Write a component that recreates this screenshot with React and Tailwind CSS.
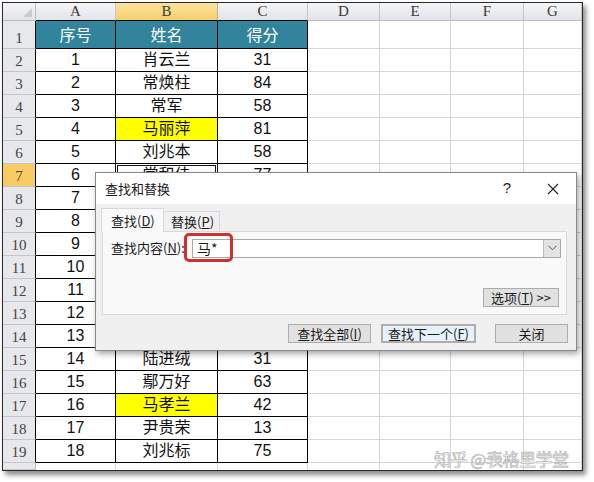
import React from "react";

const SANS = { fontFamily: '"Liberation Sans", "Noto Sans CJK SC", sans-serif' };
const CJK = { fontFamily: '"Noto Sans CJK SC", "Noto Sans", sans-serif' };
const HEAD = { fontFamily: '"Liberation Serif", "DejaVu Serif", serif' };

const rows = [
  [1, "肖云兰", 31],
  [2, "常焕柱", 84],
  [3, "常军", 58],
  [4, "马丽萍", 81, true],
  [5, "刘兆本", 58],
  [6, "常和佳", 77],
  [7, "王春梅", 66],
  [8, "李建国", 92],
  [9, "赵一鸣", 47],
  [10, "孙晓燕", 70],
  [11, "周立新", 55],
  [12, "吴秀英", 88],
  [13, "郑海涛", 39],
  [14, "陆进绒", 31],
  [15, "鄢万好", 63],
  [16, "马孝兰", 42, true],
  [17, "尹贵荣", 13],
  [18, "刘兆标", 75],
];

const cols = ["A", "B", "C", "D", "E", "F", "G"];

function ColHeaders() {
  return (
    <>
      <div className="relative border-r border-b border-[#b9bcc2] bg-gradient-to-b from-[#f4f5f7] to-[#e2e4e8]">
        <svg className="absolute right-[3px] bottom-[3px]" width="9" height="9" viewBox="0 0 9 9">
          <path d="M9 0 L9 9 L0 9 Z" fill="#c9cbcf" />
        </svg>
      </div>
      {cols.map((c, i) => (
        <div
          key={c}
          style={HEAD}
          className={
            "flex items-center justify-center text-[15px] text-[#3a3a3a] border-r border-b " +
            (i < 3 ? "border-b-black " : "border-b-[#b9bcc2] ") +
            (i === 1
              ? "bg-gradient-to-b from-[#fbe39f] to-[#f6cf6a] border-r-[#c9b27a]"
              : "bg-gradient-to-b from-[#f4f5f7] to-[#e2e4e8] border-r-[#c3c6cb]")
          }
        >
          {c}
        </div>
      ))}
    </>
  );
}

function RowHead({ n, active }) {
  return (
    <div
      style={HEAD}
      className={
        "flex items-end justify-center pb-[1px] text-[15px] leading-[18px] text-[#444] border-b border-r border-b-[#c3c6cb] " +
        (n ? "border-r-black " : "border-r-[#b9bcc2] ") +
        (active ? "bg-[#f8cb63]" : "bg-[#e6e8ec]")
      }
    >
      {n}
    </div>
  );
}

function Cell({ children, yellow, teal, selected }) {
  let cls = "flex items-end justify-center border-r border-b border-black text-[16px] leading-[20px] pb-[1px] text-[#111] ";
  if (teal) cls = "flex items-center justify-center border-r border-b border-black text-[16px] text-white bg-[#31849b] pt-[2px] ";
  if (yellow) cls += "bg-[#ffff00] ";
  if (selected) cls += "shadow-[inset_0_0_0_1px_#fff,inset_0_0_0_2px_#111] ";
  return (
    <div style={SANS} className={cls}>
      <span>{children}</span>
    </div>
  );
}

function Empties() {
  return (
    <>
      {[0, 1, 2, 3].map((i) => (
        <div key={i} className="border-r border-b border-[#d6d6d6]" />
      ))}
    </>
  );
}

function Sheet() {
  return (
    <div className="ml-[2px] mt-[2px] w-[581px] h-[469px] border border-[#2a2a2a] bg-white overflow-hidden shadow-[3px_4px_5px_rgba(0,0,0,0.45)]">
      <div className="grid grid-cols-[33px_80px_102px_90px_72px_71px_73px_1fr] grid-rows-[18px_28px_repeat(18,23px)_1fr] h-full">
        <ColHeaders />
        <RowHead n={1} />
        <Cell teal>序号</Cell>
        <Cell teal>姓名</Cell>
        <Cell teal>得分</Cell>
        <Empties />
        {rows.map(([no, name, score, yellow], i) => (
          <React.Fragment key={no}>
            <RowHead n={i + 2} active={i + 2 === 7} />
            <Cell>{no}</Cell>
            <Cell yellow={yellow} selected={i + 2 === 7}>
              {name}
            </Cell>
            <Cell>{score}</Cell>
            <Empties />
          </React.Fragment>
        ))}
        <RowHead />
        {[0, 1, 2, 3, 4, 5, 6].map((i) => (
          <div key={i} className="border-r border-[#d6d6d6]" />
        ))}
      </div>
    </div>
  );
}

function Btn({ children, className = "" }) {
  return (
    <div
      className={
        "h-[19px] flex items-center justify-center bg-[#e1e1e1] border border-[#adadad] text-[13px] leading-none whitespace-nowrap " +
        className
      }
    >
      {children}
    </div>
  );
}

function Dialog() {
  return (
    <div
      style={CJK}
      className="absolute left-[95px] top-[172px] w-[482px] h-[179px] bg-[#f0f0f0] border border-[#8a8a8a] shadow-[2px_3px_6px_rgba(0,0,0,0.35)] flex flex-col text-[13px] text-[#1b1b1b]"
    >
      <div className="h-[31px] bg-white flex items-center pl-[9px] pr-[17px] shrink-0">
        <span className="text-[13px]">查找和替换</span>
        <span style={SANS} className="ml-auto mr-[36px] text-[15px] text-[#222]">?</span>
        <svg width="12" height="12" viewBox="0 0 12 12">
          <path d="M1 1 L11 11 M11 1 L1 11" stroke="#222" strokeWidth="1.1" />
        </svg>
      </div>
      <div className="flex flex-col pl-[5px] pr-[9px] pt-[4px]">
        <div className="flex items-end h-[23px]">
          <div className="relative z-10 -mb-px w-[63px] h-[24px] bg-[#f9f9f9] border border-b-0 border-[#d9d9d9] flex items-center pl-[9px] whitespace-nowrap">
            查找(<u>D</u>)
          </div>
          <div className="w-[56px] h-[20px] bg-[#f0f0f0] border border-l-0 border-b-0 border-[#d9d9d9] flex items-center pl-[7px] whitespace-nowrap">
            替换(<u>P</u>)
          </div>
        </div>
        <div className="ml-[1px] h-[84px] bg-[#f9f9f9] border border-[#d9d9d9] flex flex-col pl-[8px] pr-[5px] pt-[7px]">
          <div className="flex items-center h-[18px]">
            <span className="w-[81px] whitespace-nowrap">
              查找内容(<u>N</u>):
            </span>
            <div className="flex-1 h-[19px] bg-white border border-[#a9a9a9] flex items-center">
              <span className="pl-[4px] text-[14px]">马*</span>
              <div className="ml-auto w-[17px] h-full bg-[#e3e3e3] border-l border-[#b9b9b9] flex items-center justify-center">
                <svg width="9" height="6" viewBox="0 0 9 6">
                  <path d="M0.5 0.8 L4.5 4.8 L8.5 0.8" fill="none" stroke="#555" strokeWidth="1" />
                </svg>
              </div>
            </div>
          </div>
          <Btn className="self-end mt-auto mb-[7px] mr-[2px] w-[76px]">
            选项(<u>T</u>) &gt;&gt;
          </Btn>
        </div>
      </div>
      <div className="flex justify-end mt-[9px] pr-[8px]">
        <Btn className="w-[83px]">
          查找全部(<u>I</u>)
        </Btn>
        <Btn className="w-[95px] ml-[10px] bg-[#e5f1fb] border-2 border-[#2f7fc9]">
          查找下一个(<u>F</u>)
        </Btn>
        <Btn className="w-[73px] ml-[19px]">关闭</Btn>
      </div>
    </div>
  );
}

export default function App() {
  return (
    <div className="relative w-[594px] h-[482px] bg-white overflow-hidden">
      <Sheet />
      <Dialog />
      <div className="absolute left-[184px] top-[233px] w-[49px] h-[29px] border-[3px] border-[#cf312e] rounded-[5px]" />
      <div
        style={CJK}
        className="absolute left-[434px] top-[446px] text-[17px] text-white tracking-[-0.5px] [-webkit-text-stroke:0.6px_#a8a8a8]"
      >
        知乎 @表格里学堂
      </div>
    </div>
  );
}
